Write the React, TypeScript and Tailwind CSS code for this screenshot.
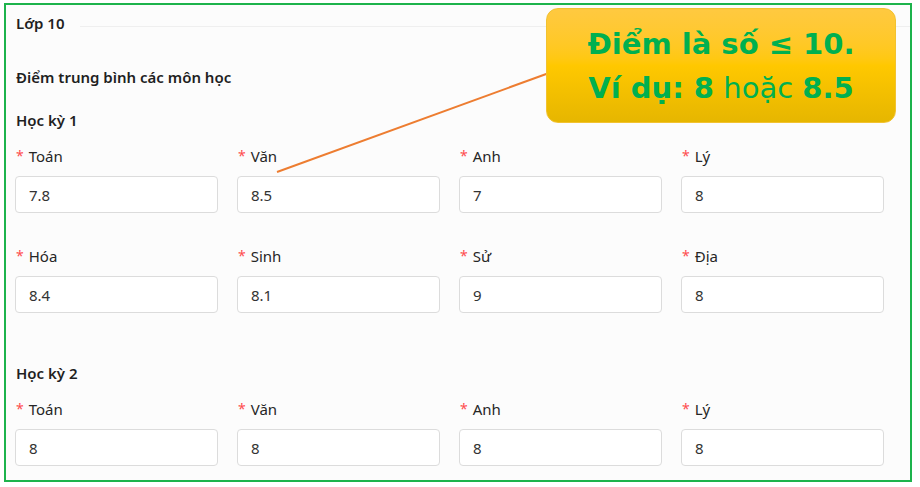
import React from 'react';

type Score = { subject: string; value: string };

const TERM_1: Score[] = [
  { subject: 'Toán', value: '7.8' },
  { subject: 'Văn', value: '8.5' },
  { subject: 'Anh', value: '7' },
  { subject: 'Lý', value: '8' },
  { subject: 'Hóa', value: '8.4' },
  { subject: 'Sinh', value: '8.1' },
  { subject: 'Sử', value: '9' },
  { subject: 'Địa', value: '8' },
];

const TERM_2: Score[] = [
  { subject: 'Toán', value: '8' },
  { subject: 'Văn', value: '8' },
  { subject: 'Anh', value: '8' },
  { subject: 'Lý', value: '8' },
];

const uiFont = { fontFamily: '"Noto Sans", "Open Sans", Arial, sans-serif' };

function ScoreField({ item }: { item: Score }) {
  return (
    <div className="flex flex-col">
      <label className="flex h-5 items-center pl-px text-[15px] leading-5 text-[#262626]">
        <span className="mr-[5px] text-[14px] text-[#ff4d4f]">*</span>
        {item.subject}
      </label>
      <input
        readOnly
        value={item.value}
        className="mt-[10px] h-[37px] w-full rounded-[4px] border border-[#dcdcdc] bg-white px-[13px] text-[15px] text-[#333] outline-none"
        style={uiFont}
      />
    </div>
  );
}

function ScoreGrid({ items }: { items: Score[] }) {
  return (
    <div className="grid grid-cols-4 gap-x-[19px] gap-y-[33px] w-[869px]">
      {items.map((s, i) => (
        <ScoreField key={i} item={s} />
      ))}
    </div>
  );
}

function HintCallout() {
  return (
    <>
      <svg className="pointer-events-none absolute left-0 top-0" width="920" height="487">
        <line x1="277" y1="172" x2="560" y2="69" stroke="#ed7d31" strokeWidth="2" />
      </svg>
      <div
        className="absolute left-[546px] top-[8px] flex h-[115px] w-[350px] flex-col items-center justify-center rounded-[12px] border border-[#f2c230] bg-linear-to-b from-[#ffc940] via-[#ffc800] to-[#e6b600] text-[#00b050]"
        style={{ fontFamily: '"DejaVu Sans", Verdana, sans-serif' }}
      >
        <div className="text-[29px] font-bold leading-[44px]">Điểm là số ≤ 10.</div>
        <div className="text-[29px] leading-[44px]">
          <span className="font-bold">Ví dụ: 8</span> hoặc <span className="font-bold">8.5</span>
        </div>
      </div>
    </>
  );
}

export default function App() {
  return (
    <div className="relative h-[487px] w-[920px] bg-white pl-[4px] pt-[3px]" style={uiFont}>
      <div className="h-[479px] w-[908px] border-2 border-[#1db34c] bg-[#fcfcfc] pl-[9px]">
        <div className="flex h-[36px] items-center">
          <span className="pl-px text-[15px] font-semibold text-[#1f1f1f]">Lớp 10</span>
          <div className="ml-[16px] mt-[6px] h-px flex-1 bg-[#efefef]" />
        </div>

        <div className="mt-[26px] h-5 pl-px text-[15px] font-semibold leading-5 text-[#1f1f1f]">
          Điểm trung bình các môn học
        </div>

        <div className="mt-[23px] h-5 pl-px text-[15px] font-semibold leading-5 text-[#1f1f1f]">Học kỳ 1</div>
        <div className="mt-[16px]">
          <ScoreGrid items={TERM_1} />
        </div>

        <div className="mt-[50px] h-5 pl-px text-[15px] font-semibold leading-5 text-[#1f1f1f]">Học kỳ 2</div>
        <div className="mt-[16px]">
          <ScoreGrid items={TERM_2} />
        </div>
      </div>

      <HintCallout />
    </div>
  );
}
